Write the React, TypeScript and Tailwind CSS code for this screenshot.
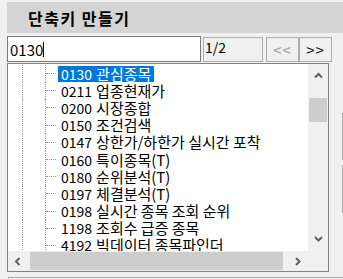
import React from "react"

const items = [
  ["0130", "관심종목"],
  ["0211", "업종현재가"],
  ["0200", "시장종합"],
  ["0150", "조건검색"],
  ["0147", "상한가/하한가 실시간 포착"],
  ["0160", "특이종목(T)"],
  ["0180", "순위분석(T)"],
  ["0197", "체결분석(T)"],
  ["0198", "실시간 종목 조회 순위"],
  ["1198", "조회수 급증 종목"],
  ["4192", "빅데이터 종목파인더"],
]

function Chevron({ dir }: { dir: "up" | "down" | "left" | "right" }) {
  const d = {
    up: "M1 5.5 L4.5 2 L8 5.5",
    down: "M1 2 L4.5 5.5 L8 2",
    left: "M5.5 1 L2 4.5 L5.5 8",
    right: "M2 1 L5.5 4.5 L2 8",
  }[dir]
  return (
    <svg width="9" height="9" viewBox="0 0 9 9">
      <path d={d} fill="none" stroke="#606060" strokeWidth="2" />
    </svg>
  )
}

export default function App() {
  return (
    <div className="w-[343px] h-[279px] overflow-hidden bg-[#f0f0f0] font-['Noto_Sans_CJK_KR',sans-serif] text-black">
      <div className="pl-[7px] pt-[2px] flex flex-col">
        {/* title */}
        <div className="h-[31px] bg-[#d4d4d4] flex items-center pl-[21px] text-[16px] font-bold leading-none tracking-[1.5px]">
          단축키 만들기
        </div>

        {/* search row */}
        <div className="mt-[3px] flex items-start h-[27px]">
          <div className="w-[194px] h-[26px] border border-[#7a7a7a] bg-white flex items-center pl-[2px] text-[15px] leading-none">
            <span>0130</span>
            <span className="w-px h-[15px] bg-black" />
          </div>
          <div className="ml-[2px] mt-[1px] w-[60px] h-[25px] border border-[#adadad] pl-[1px] pt-[1px] text-[14px] leading-[16px]">
            1/2
          </div>
          <div className="ml-[3px] mt-[1px] flex">
            <button className="w-[33px] h-[25px] border border-[#adadad] bg-[#f0f0f0] text-[#a0a0a0] text-[15px] leading-none tracking-[1px]">
              &lt;&lt;
            </button>
            <button className="w-[33px] h-[25px] border border-[#adadad] bg-[#f0f0f0] text-[#202020] text-[15px] leading-none tracking-[1px]">
              &gt;&gt;
            </button>
          </div>
        </div>

        {/* tree */}
        <div className="flex">
          <div className="w-[322px] h-[209px] border border-[#828282] bg-white grid grid-cols-[300px_20px] grid-rows-[187px_20px]">
            <div className="overflow-hidden flex flex-col pt-[1px]">
              {items.map(([code, name], i) => (
                <div key={code} className="h-[17.2px] shrink-0 flex items-center">
                  <div className="w-[14px] shrink-0" />
                  <div className="w-[23px] h-full shrink-0 border-l border-dotted border-[#9a9a9a]" />
                  <div className="w-[13px] h-full shrink-0 border-l border-dotted border-[#9a9a9a] flex items-center">
                    <div className="w-[10px] border-t border-dotted border-[#9a9a9a]" />
                  </div>
                  <span
                    className={`h-[16px] px-[3px] whitespace-nowrap flex items-center leading-[16px] ${
                      i === 0 ? "bg-[#0078d7] text-white" : ""
                    }`}
                  >
                    <span className="text-[14px]">{code}</span>
                    <span className="text-[15px] ml-[4px]">{name}</span>
                  </span>
                </div>
              ))}
            </div>

            {/* vertical scrollbar */}
            <div className="bg-[#f0f0f0] flex flex-col">
              <div className="h-[24px] flex items-center justify-center">
                <Chevron dir="up" />
              </div>
              <div className="mt-[10px] mx-[1px] h-[24px] bg-[#cdcdcd]" />
              <div className="mt-auto h-[24px] flex items-center justify-center">
                <Chevron dir="down" />
              </div>
            </div>

            {/* horizontal scrollbar */}
            <div className="bg-[#f0f0f0] flex">
              <div className="w-[20px] flex items-center justify-center">
                <Chevron dir="left" />
              </div>
              <div className="ml-[2px] my-[1px] w-[253px] bg-[#cdcdcd]" />
              <div className="ml-auto w-[20px] flex items-center justify-center">
                <Chevron dir="right" />
              </div>
            </div>
            <div className="bg-[#f0f0f0]" />
          </div>

          <div className="ml-[13px] w-[10px] flex flex-col">
            <div className="mt-[50px] h-[47px] border border-[#adadad]" />
            <div className="mt-[5px] h-[48px] border border-[#adadad]" />
          </div>
        </div>

        <div className="mt-[5px] ml-[1px] h-[10px] border-t border-l border-[#adadad]" />
      </div>
    </div>
  )
}
